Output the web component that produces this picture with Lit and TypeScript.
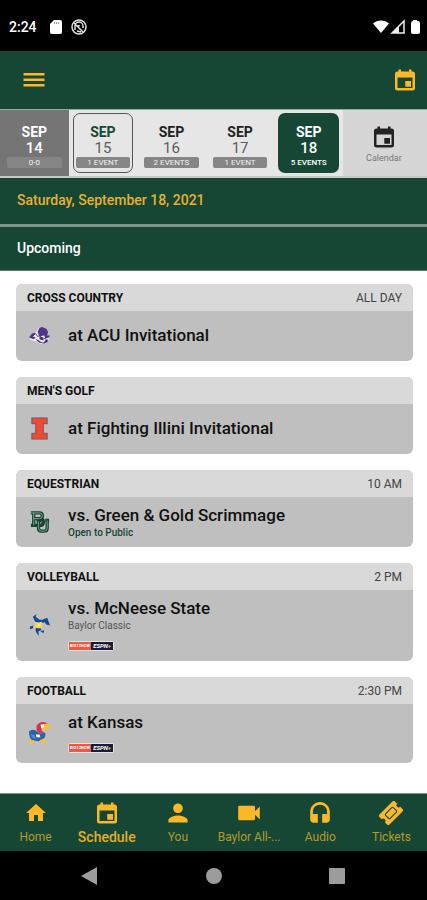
import { LitElement, html, css, nothing, TemplateResult } from "lit";
import { customElement, state } from "lit/decorators.js";
import { classMap } from "lit/directives/class-map.js";

const EVENT =
  "M5.500 1.500h2.500v2h8v-2h2.500v2h1a2.500 2.500 0 0 1 2.500 2.500v14a2.500 2.500 0 0 1-2.500 2.500h-15a2.500 2.500 0 0 1-2.500-2.500V6a2.500 2.500 0 0 1 2.500-2.500h1zM4.500 9.500v10.500h15V9.500zM12.500 13h5.500v5.500h-5.500z";

const icon = (d: string, box = "0 0 24 24") => html`
  <svg class="icon" viewBox=${box} aria-hidden="true"><path fill="currentColor" d=${d}></path></svg>
`;

const eventIcon = html`<svg class="icon" viewBox="0 0 24 24" aria-hidden="true">
  <path fill="currentColor" fill-rule="evenodd" d=${EVENT}></path>
  <path fill="currentColor" d="M12.500 13h5.500v5.500h-5.500z"></path>
</svg>`;

interface Day { month: string; day: string; note: string; kind: string; }
interface Game {
  sport: string; time?: string; title: string; note?: string; strong?: boolean; tv?: boolean; logo: TemplateResult;
}
interface Tab { label: string; art: TemplateResult; }

const DAYS: Day[] = [
  { month: "SEP", day: "14", note: "0-0", kind: "past" },
  { month: "SEP", day: "15", note: "1 EVENT", kind: "today" },
  { month: "SEP", day: "16", note: "2 EVENTS", kind: "plain" },
  { month: "SEP", day: "17", note: "1 EVENT", kind: "plain" },
  { month: "SEP", day: "18", note: "5 EVENTS", kind: "plain" },
];

const acu = html`<svg class="logo" viewBox="0 0 24 24" aria-hidden="true">
  <path fill="#eeeaf4" d="M1 14l3-4 4-1 3-5 6 0 3 4 0 4 3 1-2 4-2 3-6 1-5-3-5-1z"></path>
  <path fill="#50348c" d="M10 8l2-4 3-1 4 2 2 3-1 4-4 0-4 1zM1 14l3-4 4-1-3 4 3 1-2 2zM12 13l4 1 0 3-4-1zM17 12l6 0-1 2-4 1zM8 16l3 1 4 3-4-1zM18 17l3-1-1 3-4 1z"></path>
  <path fill="none" stroke="#3a2670" stroke-width="0.800" d="M3 14l5-4 2 3 3-1 1 4 4-1 2 3-3 2-5-1-3-3"></path>
</svg>`;

const illinois = html`<svg class="logo" viewBox="0 0 24 24" aria-hidden="true">
  <g fill="#f04a32" stroke="#6c5c64" stroke-width="1">
    <rect x="8" y="3" width="8" height="18"></rect>
    <rect x="4" y="1" width="16" height="6"></rect>
    <rect x="4" y="17" width="16" height="6"></rect>
  </g>
  <rect x="8.500" y="4" width="7" height="16" fill="#f04a32"></rect>
</svg>`;

const baylor = html`<svg class="logo" viewBox="0 0 24 24" aria-hidden="true">
  <g fill="none" stroke-linejoin="round">
    <g stroke="#14462f" stroke-width="3.500">
      <path d="M3 3h9q3 0 3 3t-3 3H6h7q3 0 3 3.500t-3 3.500H3M6 3v13"></path>
      <path d="M9 11h5M11 11v8q0 3 3 3h3q3 0 3-3v-8M18 11h4"></path>
    </g>
    <g stroke="#9db5a8" stroke-width="0.800">
      <path d="M3 3h9q3 0 3 3t-3 3H6M6 3v13"></path>
      <path d="M11 12v7q0 3 3 3h3q3 0 3-3v-8"></path>
    </g>
  </g>
</svg>`;

const mcneese = html`<svg class="logo" viewBox="0 0 24 24" aria-hidden="true">
  <path fill="#12479a" d="M5 4l4-3-1 3 4 3 3 0 5-2 3 8-4-1-2-3-3 4-5-1-2-4zM2 14l4-1-1 3-3 1zM8 16l5-1 1 3-3 1 0 5-3-5zM13 19l4-1-1 3z"></path>
  <path fill="#f2d95c" d="M7 9l4 1 3-1 2 2-2 5-4 0-5-2 3-2z"></path>
  <path fill="#fff5c4" d="M10 11l3 1-2 2z"></path>
</svg>`;

const kansas = html`<svg class="logo" viewBox="0 0 24 24" aria-hidden="true">
  <path fill="#2b62a8" d="M1 11q3-3 7-1l5 3 5-1q1 5-3 8l-4 1-7-1q-3-3-3-9z"></path>
  <path fill="#d8333f" d="M9 5q2-4 7-4l4 1-1 3-4 1-1 4 3 2-4 1-4-3z"></path>
  <path fill="#fff" d="M13 4l4-1 0 3-3 2zM8 14l4 0 1 3-4 0z"></path>
  <path fill="#f2c230" d="M17 3q6-1 7 4l-4 0 1 3-5-1zM1 20l5 0 2 3-7 0zM12 20l5-2 3 3-6 2z"></path>
  <path fill="#4f8ccc" d="M3 13l4 2 1 4-4-2z"></path>
</svg>`;

const GAMES: Game[] = [
  { sport: "CROSS COUNTRY", time: "ALL DAY", title: "at ACU Invitational", logo: acu },
  { sport: "MEN'S GOLF", title: "at Fighting Illini Invitational", logo: illinois },
  { sport: "EQUESTRIAN", time: "10 AM", title: "vs. Green & Gold Scrimmage", note: "Open to Public", strong: true, logo: baylor },
  { sport: "VOLLEYBALL", time: "2 PM", title: "vs. McNeese State", note: "Baylor Classic", tv: true, logo: mcneese },
  { sport: "FOOTBALL", time: "2:30 PM", title: "at Kansas", tv: true, logo: kansas },
];

const ticket = html`<svg class="icon" viewBox="1 1 22 22" aria-hidden="true">
  <g transform="rotate(-45 12 12)">
    <path fill="currentColor" d="M2 5.500h20v4.500a2 2 0 0 0 0 4v4.500H2v-4.500a2 2 0 0 0 0-4z"></path>
    <rect x="7" y="9" width="10" height="6" rx="1" fill="none" stroke="#154734" stroke-width="1"></rect>
  </g>
</svg>`;

const TABS: Tab[] = [
  { label: "Home", art: icon("M10 20v-6h4v6h5v-8h3L12 3 2 12h3v8z") },
  { label: "Schedule", art: eventIcon },
  { label: "You", art: icon("M12 12c2.210 0 4-1.790 4-4s-1.790-4-4-4-4 1.790-4 4 1.790 4 4 4zm0 2c-2.670 0-8 1.340-8 4v2h16v-2c0-2.660-5.330-4-8-4z", "2 2 20 20") },
  { label: "Baylor All-...", art: icon("M17 10.500V7c0-.55-.45-1-1-1H4c-.55 0-1 .45-1 1v10c0 .55.45 1 1 1h12c.55 0 1-.45 1-1v-3.500l4 4v-11l-4 4z", "2 2 20 20") },
  { label: "Audio", art: icon("M12 1c-4.970 0-9 4.030-9 9v7c0 1.660 1.340 3 3 3h4v-8H5.500v-2c0-3.870 2.630-6.500 6.500-6.500s6.500 2.630 6.500 6.500v2H14v8h4c1.660 0 3-1.340 3-3v-7c0-4.970-4.030-9-9-9z", "1 0 22 22") },
  { label: "Tickets", art: ticket },
];

@customElement("app-root")
export class AppRoot extends LitElement {
  @state() private selected = "18";
  @state() private tab = "Schedule";

  static styles = css`
    :host {
      display: flex;
      flex-direction: column;
      min-height: 100vh;
      background: #fff;
      color: #111;
      font-family: Roboto, "Liberation Sans", sans-serif;
    }
    * { box-sizing: border-box; }
    svg { display: block; flex: none; }
    button { border: 0; padding: 0; background: none; color: inherit; font: inherit; cursor: pointer; }
    a { color: inherit; text-decoration: none; }
    h1, h2, h3, p { margin: 0; }

    .status { display: flex; align-items: center; gap: 7px; height: 51px; padding: 2px 4px 0 9px; background: #000; color: #fff; }
    .clock { margin-right: 4px; font-size: 14px; font-weight: 500; }
    .signals { display: flex; align-items: center; gap: 1px; margin-left: auto; }
    .glyph { width: 16px; height: 16px; }

    .appbar { display: flex; align-items: center; justify-content: space-between; height: 58px; padding: 0 10px 0 22px; background: #154734; color: #fdb827; }
    .tool { display: grid; place-items: center; width: 24px; height: 24px; }
    .icon { width: 24px; height: 24px; }

    .days { display: flex; border-top: 1px solid #9aa69f; border-bottom: 2px solid #c4c8c5; background: #e6e6e6; }
    .day { flex: 1; padding: 3px 4px; color: #5c5c5c; }
    .past { background: #757575; color: #fff; }
    .pick { display: flex; flex-direction: column; align-items: center; width: 100%; height: 60px; padding: 10px 2px 0; border: 1px solid transparent; border-radius: 7px; }
    .month { font-size: 14px; line-height: 16px; font-weight: 700; color: #222; }
    .past .month { color: #fff; }
    .number { font-size: 15px; line-height: 17px; }
    .count { width: 100%; border-radius: 2px; background: #858585; color: #f2f2f2; font-size: 8px; line-height: 11px; text-align: center; white-space: nowrap; }
    .today .pick { border-color: #555; }
    .today .month { color: #154734; }
    .selected .pick { background: #154734; color: #fff; }
    .selected .month { color: #fff; }
    .selected .number, .past .number { font-weight: 500; }
    .selected .count { background: none; color: #fff; font-weight: 500; }
    .calendar { display: flex; flex-direction: column; align-items: center; justify-content: center; gap: 4px; width: 84px; padding: 2px 2px 0 0; background: #d6d6d6; color: #222; }
    .caption { font-size: 9px; line-height: 11px; color: #777; }

    .bar { height: 46px; padding: 0 17px; background: #154734; color: #fff; font-size: 14px; line-height: 44px; font-weight: 500; }
    .date { color: #e9b02c; }
    .next { height: 47px; border-top: 3px solid #839189; border-bottom: 1px solid #5e7d70; line-height: 42px; }

    .list { flex: 1; display: flex; flex-direction: column; gap: 16px; padding: 13px 14px 30px 16px; }
    .card { overflow: hidden; border-radius: 6px; background: #bfbfbf; }
    .head { display: flex; align-items: center; justify-content: space-between; height: 27px; padding: 0 11px; background: #d9d9d9; font-size: 12px; }
    .sport { font-size: 12px; font-weight: 700; }
    .time { color: #444; }
    .body { display: flex; align-items: center; gap: 17px; min-height: 50px; padding: 6px 12px 8px; }
    .logo { width: 23px; height: 23px; }
    .info { display: flex; flex-direction: column; align-items: flex-start; }
    .title { font-size: 17px; line-height: 24px; font-weight: 500; }
    .note { font-size: 10px; line-height: 12px; color: #555; }
    .strong { color: #154734; font-weight: 500; }
    .tv { display: flex; margin: 9px 0 2px; border: 1px solid #e8e0dc; border-radius: 2px; font-size: 6px; line-height: 8px; font-weight: 700; color: #fff; }
    .now { padding: 0 1px; background: #f0583f; font-size: 4px; }
    .espn { padding: 0 2px; background: #181b3c; font-style: italic; }
    .plus { color: #f2cf3a; }

    .tabs { display: flex; height: 58px; border-top: 1px solid #7d978b; background: #154734; color: #fdb827; }
    .tab { flex: 1; min-width: 0; display: flex; flex-direction: column; align-items: center; padding: 7px 2px 0; }
    .label { white-space: nowrap; font-size: 12px; line-height: 24px; color: #b59a2b; }
    .on .label { font-size: 14px; font-weight: 500; color: #e2ae2a; }

    .system { display: flex; justify-content: space-between; align-items: center; height: 49px; padding: 0 80px; background: #000; color: #9c9c9c; }
    .key { width: 20px; height: 20px; }
  `;

  private renderDay(d: Day) {
    return html`
      <div class=${classMap({ day: true, [d.kind]: true, selected: d.day === this.selected })}>
        <button class="pick" aria-pressed=${d.day === this.selected} @click=${() => (this.selected = d.day)}>
          <span class="month">${d.month}</span>
          <span class="number">${d.day}</span>
          <span class="count">${d.note}</span>
        </button>
      </div>`;
  }

  private renderGame(g: Game) {
    return html`
      <article class="card">
        <header class="head">
          <h3 class="sport">${g.sport}</h3>
          ${g.time ? html`<span class="time">${g.time}</span>` : nothing}
        </header>
        <div class="body">
          ${g.logo}
          <div class="info">
            <p class="title">${g.title}</p>
            ${g.note ? html`<p class=${classMap({ note: true, strong: !!g.strong })}>${g.note}</p>` : nothing}
            ${g.tv
              ? html`<div class="tv">
                  <span class="now">BIG12NOW</span><span class="espn">ESPN<span class="plus">+</span></span>
                </div>`
              : nothing}
          </div>
        </div>
      </article>`;
  }

  render() {
    return html`
      <div class="status">
        <span class="clock">2:24</span>
        <svg class="glyph" viewBox="0 0 16 16" aria-hidden="true">
          <path fill="#fff" d="M6 1h6a2 2 0 0 1 2 2v10a2 2 0 0 1-2 2H4a2 2 0 0 1-2-2V5z"></path>
          <path stroke="#999" d="M6.500 3v2M8.500 3v2M10.500 3v2"></path>
        </svg>
        <svg class="glyph" viewBox="0 0 16 16" aria-hidden="true">
          <circle cx="8" cy="8" r="7" fill="none" stroke="#ddd" stroke-width="1.500"></circle>
          <path fill="none" stroke="#ddd" stroke-width="1.500" d="M4 11V7a4 4 0 0 1 8 0v2M3 4l9 9M6 8a2 2 0 0 1 3-1M6 12l4 1"></path>
        </svg>
        <div class="signals">
          <svg class="glyph" viewBox="0 0 16 16" aria-hidden="true"><path fill="#fff" d="M0 4.500C4 .5 12 .5 16 4.500L8 14z"></path></svg>
          <svg class="glyph" viewBox="0 0 16 16" aria-hidden="true"><path fill="none" stroke="#eee" stroke-width="1.500" d="M2 14L14 2v12z"></path><path fill="#eee" d="M2 14l7-7v7z"></path></svg>
          <svg class="glyph" viewBox="0 0 16 16" aria-hidden="true"><path fill="#fff" d="M6 1h4v1h1a2 2 0 0 1 2 2v9a2 2 0 0 1-2 2H6a2 2 0 0 1-2-2V4a2 2 0 0 1 2-2z"></path></svg>
        </div>
      </div>

      <header class="appbar">
        <button class="tool" aria-label="Menu">${icon("M1.500 5h21v2.500h-21zM1.500 10.500h21V13h-21zM1.500 16h21v2.500h-21z")}</button>
        <button class="tool" aria-label="Open calendar">${eventIcon}</button>
      </header>

      <div class="days">
        ${DAYS.map((d) => this.renderDay(d))}
        <button class="calendar">${eventIcon}<span class="caption">Calendar</span></button>
      </div>
      <h1 class="bar date">Saturday, September 18, 2021</h1>
      <h2 class="bar next">Upcoming</h2>

      <main class="list">${GAMES.map((g) => this.renderGame(g))}</main>

      <nav class="tabs">
        ${TABS.map(
          (t) => html`<a class=${classMap({ tab: true, on: t.label === this.tab })} href="#" @click=${() => (this.tab = t.label)}>
            ${t.art}<span class="label">${t.label}</span>
          </a>`
        )}
      </nav>

      <div class="system">
        <button class="key" aria-label="Back"><svg viewBox="0 0 20 20" aria-hidden="true"><path fill="currentColor" d="M1 10L17 1v18z"></path></svg></button>
        <button class="key" aria-label="Home screen"><svg viewBox="0 0 20 20" aria-hidden="true"><circle cx="10" cy="10" r="8" fill="currentColor"></circle></svg></button>
        <button class="key" aria-label="Recent apps"><svg viewBox="0 0 20 20" aria-hidden="true"><rect x="2" y="2" width="16" height="16" rx="1" fill="currentColor"></rect></svg></button>
      </div>
    `;
  }
}
